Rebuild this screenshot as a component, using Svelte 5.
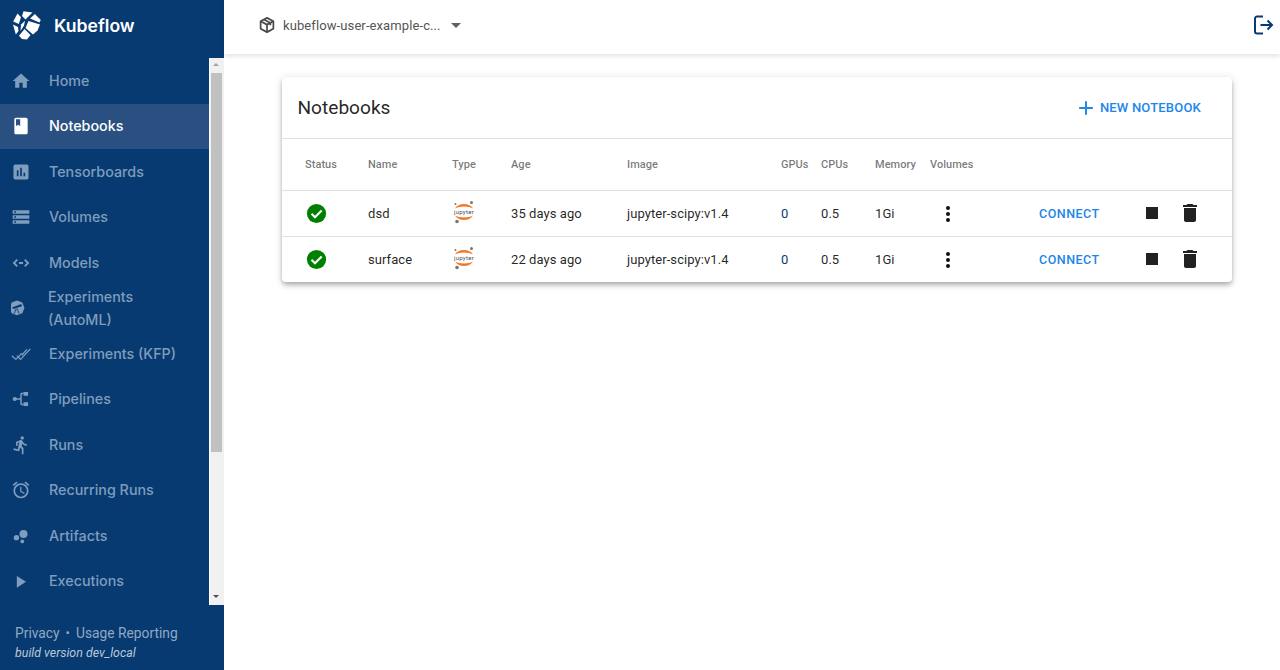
<script>
	const navItems = [
		{ label: 'Home', icon: 'home' },
		{ label: 'Notebooks', icon: 'book', active: true },
		{ label: 'Tensorboards', icon: 'chart' },
		{ label: 'Volumes', icon: 'storage' },
		{ label: 'Models', icon: 'models' },
		{ label: 'Experiments (AutoML)', icon: 'scope', tall: true },
		{ label: 'Experiments (KFP)', icon: 'done' },
		{ label: 'Pipelines', icon: 'pipe' },
		{ label: 'Runs', icon: 'run' },
		{ label: 'Recurring Runs', icon: 'alarm' },
		{ label: 'Artifacts', icon: 'bubbles' },
		{ label: 'Executions', icon: 'play' }
	];

	const columns = ['Status', 'Name', 'Type', 'Age', 'Image', 'GPUs', 'CPUs', 'Memory', 'Volumes', '', '', ''];

	const notebooks = [
		{ name: 'dsd', age: '35 days ago' },
		{ name: 'surface', age: '22 days ago' }
	];
</script>

<div class="page">
	<aside class="sidebar">
		<div class="brand">
			<svg class="logo" viewBox="0 0 30 30" width="30" height="30">
				<g fill="#fff">
					<path d="M11.500 1.200 L20.500 2.500 L13.500 9.500 L10 6 Z" />
					<path d="M5.500 3.500 L9 7.200 L6.800 14 L1.200 11.500 Z" />
					<path d="M1 14.500 L6 17 L6.500 21 L3.800 24.500 Z" />
					<path d="M22.800 4 L28.800 10 L27.500 12.500 L18 8.500 Z" />
					<path d="M16.500 11 L28 14.500 L25.500 20.500 L21 24.500 L13.500 18 Z" />
					<path d="M7 25.800 L12.500 19 L18.500 25 L15 29.500 L10 29 Z" />
					<path d="M9 14.500 L13 10.800 L12 15.500 L8.500 21 Z" />
				</g>
			</svg>
			<span class="brand-name">Kubeflow</span>
		</div>

		<nav class="nav">
			<div class="nav-list">
				{#each navItems as item}
					<a class="nav-item" class:active={item.active} class:tall={item.tall} href="#top">
						<svg class="nav-icon" viewBox="0 0 24 24" width="20" height="20" fill="currentColor">
							{#if item.icon === 'home'}
								<path d="M10 20v-6h4v6h5v-8h3L12 3 2 12h3v8z" />
							{:else if item.icon === 'book'}
								<path d="M18 2H6c-1.100 0-2 .9-2 2v16c0 1.100.9 2 2 2h12c1.100 0 2-.9 2-2V4c0-1.100-.9-2-2-2zM6 4h5v8l-2.500-1.500L6 12V4z" />
							{:else if item.icon === 'chart'}
								<path d="M19 3H5c-1.100 0-2 .9-2 2v14c0 1.100.9 2 2 2h14c1.100 0 2-.9 2-2V5c0-1.100-.9-2-2-2zM9 17H7v-7h2v7zm4 0h-2V7h2v10zm4 0h-2v-4h2v4z" />
							{:else if item.icon === 'storage'}
								<path d="M2 20h20v-4H2v4zm2-3h2v2H4v-2zM2 4v4h20V4H2zm4 3H4V5h2v2zm-4 7h20v-4H2v4zm2-3h2v2H4v-2z" />
							{:else if item.icon === 'models'}
								<path d="M7.500 8 3.500 12 7.500 16M16.500 8 20.500 12 16.500 16M9.500 12H14.500" fill="none" stroke="currentColor" stroke-width="2.200" />
							{:else if item.icon === 'scope'}
								<g transform="translate(-3 0) scale(0.85) translate(0 2)">
									<path d="M12 1.500 19.500 4.500 22.500 12 19.500 19.500 12 22.500 4.500 19.500 1.500 12 4.500 4.500Z" />
									<path d="M5 11.500 18 6.500 19 9.500 7 13.500Z" fill="#073a70" />
									<path d="M11 13 8 20M12 13 15 20" fill="none" stroke="#073a70" stroke-width="1.200" />
								</g>
							{:else if item.icon === 'done'}
								<path d="M1 14 L6 18.500 M6 18.500 L13 11 M7 14 L11.500 18.500 L23 6 M13 13.500 L19 6.500" fill="none" stroke="currentColor" stroke-width="1.500" />
							{:else if item.icon === 'pipe'}
								<path d="M15 3.500h5.500v4.500H15zM15 16h5.500v4.500H15z" />
								<circle cx="4.500" cy="12" r="2.500" />
								<path d="M6 12h6M12 5.500h3M12 18.500h3M12 5.500v13" fill="none" stroke="currentColor" stroke-width="1.800" />
							{:else if item.icon === 'run'}
								<path d="M13.490 5.480c1.100 0 2-.9 2-2s-.9-2-2-2-2 .9-2 2 .9 2 2 2zm-3.600 13.900 1-4.400 2.100 2v6h2v-7.500l-2.100-2 .6-3c1.300 1.500 3.300 2.500 5.500 2.500v-2c-1.900 0-3.500-1-4.300-2.400l-1-1.600c-.4-.6-1-1-1.700-1-.3 0-.5.1-.8.1l-5.200 2.200v4.700h2v-3.400l1.800-.7-1.600 8.100-4.900-1-.4 2 7 1.400z" />
							{:else if item.icon === 'alarm'}
								<path d="m22 5.720-4.600-3.860-1.290 1.530 4.600 3.860L22 5.720zM7.880 3.390 6.600 1.860 2 5.710l1.290 1.530 4.590-3.850zM12.500 8H11v6l4.750 2.850.75-1.230-4-2.370V8zM12 4c-4.970 0-9 4.030-9 9s4.030 9 9 9 9-4.030 9-9-4.030-9-9-9zm0 16c-3.870 0-7-3.130-7-7s3.130-7 7-7 7 3.130 7 7-3.130 7-7 7z" />
							{:else if item.icon === 'bubbles'}
								<circle cx="6.500" cy="14" r="3.200" /><circle cx="15" cy="9.500" r="4.800" /><circle cx="13.500" cy="18.500" r="2.200" />
							{:else}
								<path d="M7 6v14l11-7z" />
							{/if}
						</svg>
						<span class="nav-label">{item.label}</span>
					</a>
				{/each}
			</div>
			<div class="scrollbar">
				<span class="arrow up"></span>
				<div class="track"><div class="thumb"></div></div>
				<span class="arrow down"></span>
			</div>
		</nav>

		<footer class="side-footer">
			<div class="links">
				<span>Privacy</span><span class="dot">•</span><span>Usage Reporting</span>
			</div>
			<div class="build">build version dev_local</div>
		</footer>
	</aside>

	<div class="content">
		<header class="topbar">
			<div class="namespace">
				<svg viewBox="0 0 24 24" width="18" height="18" fill="none" stroke="#4a4a4a" stroke-width="2.300" stroke-linejoin="round">
					<path d="M12 2.500 20.500 7v10L12 21.500 3.500 17V7Z" />
					<path d="M3.500 7 12 11.500 20.500 7M12 11.500v10M8 4.800 16.500 9.300v3" />
				</svg>
				<span class="ns-name">kubeflow-user-example-c...</span>
				<span class="caret"></span>
			</div>
			<svg class="logout" viewBox="0 0 24 24" width="24" height="24" fill="none" stroke="#0a3a72" stroke-width="2">
				<path d="M12 3.500H6a2 2 0 0 0-2 2v13a2 2 0 0 0 2 2h6" />
				<path d="M9.500 12H21M16.500 7.500 21 12l-4.500 4.500" />
			</svg>
		</header>

		<main class="main">
			<section class="card">
				<div class="card-head">
					<h1>Notebooks</h1>
					<button class="new-btn">
						<svg viewBox="0 0 24 24" width="20" height="20" fill="#2185ea"><path d="M19 13h-6v6h-2v-6H5v-2h6V5h2v6h6z" transform="translate(12 12) scale(1.170) translate(-12 -12)" /></svg>
						NEW NOTEBOOK
					</button>
				</div>

				<table>
					<thead>
						<tr>
							{#each columns as col}
								<th>{col}</th>
							{/each}
						</tr>
					</thead>
					<tbody>
						{#each notebooks as nb}
							<tr>
								<td class="status">
									<svg viewBox="0 0 24 24" width="23" height="23">
										<circle cx="12" cy="12" r="10" fill="#008000" />
										<path d="M6.800 12.300 10.400 15.900 17.400 8.800" fill="none" stroke="#fff" stroke-width="2.200" />
									</svg>
								</td>
								<td>{nb.name}</td>
								<td>
									<svg class="jupyter" viewBox="0 0 24 24" width="24" height="24">
										<circle cx="19.500" cy="2.500" r="1.500" fill="#767677" />
										<circle cx="3.500" cy="4" r="1" fill="#767677" />
										<circle cx="5" cy="21.500" r="1.800" fill="#767677" />
										<path d="M3 8.500C6 2.500 18 2.500 21 8.500C17 5.800 7 5.800 3 8.500Z" fill="#f37726" />
										<path d="M3 15.500C7 21.500 17 21.500 21 15.500C17 18 7 18 3 15.500Z" fill="#f37726" />
										<text x="12" y="13.500" text-anchor="middle" font-size="6" letter-spacing="0.300" fill="#4e4e4e">jupyter</text>
									</svg>
								</td>
								<td>{nb.age}</td>
								<td>jupyter-scipy:v1.4</td>
								<td class="num">0</td>
								<td>0.5</td>
								<td>1Gi</td>
								<td class="more">
									<svg viewBox="0 0 24 24" width="24" height="24" fill="#111"><circle cx="12" cy="6" r="2" /><circle cx="12" cy="12" r="2" /><circle cx="12" cy="18" r="2" /></svg>
								</td>
								<td class="connect"><span>CONNECT</span></td>
								<td class="action">
									<svg viewBox="0 0 24 24" width="24" height="24"><path d="M6 6h12v12H6z" fill="#212121" /></svg>
								</td>
								<td class="action">
									<svg viewBox="0 0 24 24" width="24" height="24" fill="#212121"><path d="M6 19c0 1.100.9 2 2 2h8c1.100 0 2-.9 2-2V7H6v12zM19 4h-3.500l-1-1h-5l-1 1H5v2h14V4z" /></svg>
								</td>
							</tr>
						{/each}
					</tbody>
				</table>
			</section>
		</main>
	</div>
</div>

<style>
	:global(body) {
		margin: 0;
		background: #fff;
		overflow: hidden;
	}

	.page {
		display: flex;
		height: 670px;
		font-family: Roboto, "Liberation Sans", sans-serif;
	}

	.sidebar {
		width: 224px;
		flex: none;
		display: flex;
		flex-direction: column;
		background: #073a70;
	}

	.brand {
		height: 58px;
		flex: none;
		box-sizing: border-box;
		padding: 0 0 8px 12px;
		display: flex;
		align-items: center;
		gap: 12px;
	}

	.brand-name {
		color: #fff;
		font-family: Inter, sans-serif;
		font-size: 17.600px;
		font-weight: 600;
	}

	.nav {
		height: 547px;
		flex: none;
		display: flex;
		overflow: hidden;
	}

	.nav-list {
		flex: 1;
	}

	.nav-item {
		height: 45.500px;
		display: flex;
		align-items: center;
		gap: 18px;
		padding-left: 11px;
		color: #7f9dbd;
		text-decoration: none;
		font-family: Inter, sans-serif;
		font-size: 14.300px;
		font-weight: 500;
	}

	.nav-item.active {
		background: #295080;
		color: #fff;
	}

	.nav-label {
		margin-top: -1px;
	}

	.nav-item.tall .nav-label {
		line-height: 23px;
		width: 120px;
		margin-left: -1px;
	}

	.nav-icon {
		flex: none;
	}

	.scrollbar {
		width: 15px;
		flex: none;
		box-sizing: border-box;
		background: #f1f1f1;
		border-left: 1px solid #fff;
		display: flex;
		flex-direction: column;
	}

	.arrow {
		height: 15px;
		flex: none;
		position: relative;
	}

	.arrow::after {
		content: '';
		position: absolute;
		left: 3px;
		top: 5px;
		border: 3.500px solid transparent;
	}

	.arrow.up::after {
		border-bottom-color: #a3a3a3;
		border-top-width: 0;
	}

	.arrow.down::after {
		border-top-color: #505050;
		border-bottom-width: 0;
	}

	.track {
		flex: 1;
	}

	.thumb {
		height: 379px;
		background: #c1c1c1;
		margin: 0 2px 0 1px;
	}

	.side-footer {
		padding: 20px 0 0 15px;
		color: #8fa9c4;
		font-size: 13.800px;
	}

	.links {
		display: flex;
		gap: 6px;
		line-height: 16px;
	}

	.dot {
		font-size: 13px;
	}

	.build {
		margin-top: 4px;
		font-size: 12.400px;
		font-style: italic;
		line-height: 16px;
		color: #b9c8da;
	}

	.content {
		flex: 1;
		min-width: 0;
		display: flex;
		flex-direction: column;
	}

	.topbar {
		height: 54px;
		flex: none;
		display: flex;
		align-items: center;
		justify-content: space-between;
		padding: 0 5px 0 34px;
		box-shadow: 0 2px 5px rgba(0, 0, 0, 0.12);
	}

	.namespace {
		display: flex;
		align-items: center;
		color: #555;
		font-size: 13px;
		margin-bottom: 4px;
	}

	.ns-name {
		margin-left: 7px;
		letter-spacing: 0.100px;
	}

	.caret {
		margin-left: 10px;
		border: 5px solid transparent;
		border-top-color: #616161;
		border-bottom-width: 0;
	}

	.logout {
		margin-bottom: 4px;
	}

	.main {
		flex: 1;
		padding: 23px 48px 0 58px;
	}

	.card {
		border-radius: 4px;
		background: #fff;
		box-shadow: 0 2px 4px -1px rgba(0, 0, 0, 0.2), 0 4px 5px rgba(0, 0, 0, 0.14), 0 1px 10px rgba(0, 0, 0, 0.12);
	}

	.card-head {
		height: 61px;
		display: flex;
		align-items: center;
		justify-content: space-between;
		padding: 0 31px 0 15.500px;
		border-bottom: 1px solid #e0e0e0;
	}

	h1 {
		margin: -1px 0 0;
		font-size: 19.100px;
		font-weight: 400;
		color: rgba(0, 0, 0, 0.87);
	}

	.new-btn {
		display: flex;
		align-items: center;
		gap: 4px;
		padding: 0;
		border: none;
		background: none;
		color: #2185ea;
		font-family: inherit;
		font-size: 13px;
		font-weight: 500;
		letter-spacing: 0.200px;
	}

	table {
		width: 100%;
		border-collapse: collapse;
		table-layout: fixed;
		color: rgba(0, 0, 0, 0.87);
		font-size: 13px;
		letter-spacing: 0.070px;
	}

	th {
		height: 51px;
		padding: 0;
		text-align: left;
		font-size: 11px;
		font-weight: 500;
		letter-spacing: 0.050px;
		color: rgba(0, 0, 0, 0.54);
		border-bottom: 1px solid #e0e0e0;
	}

	th:nth-child(1) { width: 86px; padding-left: 23px; box-sizing: border-box; }
	th:nth-child(2) { width: 84px; }
	th:nth-child(3) { width: 59px; }
	th:nth-child(4) { width: 116px; }
	th:nth-child(5) { width: 154px; }
	th:nth-child(6) { width: 40px; }
	th:nth-child(7) { width: 54px; }
	th:nth-child(8) { width: 55px; }
	th:nth-child(9) { width: 109px; }
	th:nth-child(10) { width: 106px; }
	th:nth-child(11) { width: 38px; }

	td {
		height: 45px;
		padding: 0;
		border-bottom: 1px solid #e0e0e0;
	}

	tbody tr:last-child td {
		border-bottom: none;
	}

	td svg {
		display: block;
	}

	.status svg {
		margin-left: 23px;
	}

	.jupyter {
		margin-top: -4px;
	}

	.num {
		color: #0a3a72;
	}

	.more svg {
		margin-left: 6px;
	}

	.connect {
		color: #2185ea;
		font-size: 12.500px;
		font-weight: 500;
		letter-spacing: 0.500px;
	}

	.connect span {
		display: block;
		margin-top: -1px;
	}

	.action svg {
		margin-left: -5px;
		margin-top: -1px;
	}
</style>
